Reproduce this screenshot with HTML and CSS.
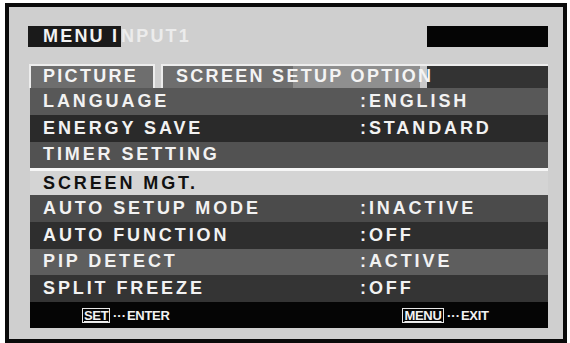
FILE: index.html
```html
<!DOCTYPE html>
<html>
<head>
<meta charset="utf-8">
<link rel="stylesheet" href="styles.css">
</head>
<body>
<div class="frame">
  <div class="header">
    <div class="title"><span class="title-on">MENU I</span><span class="title-off">NPUT1</span></div>
    <div class="blackbox"></div>
  </div>
  <div class="tabs">
    <div class="tab tab-picture">PICTURE</div>
    <div class="tab tab-screen">SCREEN SETUP OPTION</div>
  </div>
  <div class="rows">
    <div class="row r1"><span class="label">LANGUAGE</span><span class="value">:ENGLISH</span></div>
    <div class="row r2"><span class="label">ENERGY SAVE</span><span class="value">:STANDARD</span></div>
    <div class="row r3"><span class="label">TIMER SETTING</span><span class="value"></span></div>
    <div class="row r4"><span class="label">SCREEN MGT.</span><span class="value"></span></div>
    <div class="row r5"><span class="label">AUTO SETUP MODE</span><span class="value">:INACTIVE</span></div>
    <div class="row r6"><span class="label">AUTO FUNCTION</span><span class="value">:OFF</span></div>
    <div class="row r7"><span class="label">PIP DETECT</span><span class="value">:ACTIVE</span></div>
    <div class="row r8"><span class="label">SPLIT FREEZE</span><span class="value">:OFF</span></div>
  </div>
  <div class="footer">
    <div class="hint hint-set"><span class="key">SET</span><span class="dots">···</span>ENTER</div>
    <div class="hint hint-menu"><span class="key">MENU</span><span class="dots">···</span>EXIT</div>
  </div>
</div>
</body>
</html>
```

FILE: styles.css
```css
html, body {
  margin: 0;
  padding: 0;
  background: #ffffff;
}
body {
  width: 570px;
  height: 343px;
  overflow: hidden;
  font-family: "Liberation Sans", Arial, sans-serif;
  font-weight: bold;
}
.frame {
  box-sizing: border-box;
  margin: 3px 0 0 5px;
  width: 562px;
  height: 340px;
  border: 4px solid #0a0a0a;
  background: #cfcfcf;
  padding: 19px 15px 0 21px;
  display: flex;
  flex-direction: column;
}
.header {
  height: 21px;
  display: flex;
  justify-content: space-between;
  align-items: stretch;
}
.title {
  margin-left: -2px;
  display: flex;
  align-items: center;
  font-size: 18px;
  letter-spacing: 2.2px;
  line-height: 21px;
}
.title-on {
  background: #1a1a1a;
  color: #f2f2f2;
  padding-left: 15px;
  width: 78px;
  height: 21px;
  white-space: nowrap;
}
.title-off {
  color: #ececec;
}
.blackbox {
  width: 121px;
  background: #050505;
}
.tabs {
  margin-top: 17px;
  height: 24px;
  display: flex;
  margin-left: -1px;
}
.tab {
  box-sizing: border-box;
  height: 24px;
  border-top: 2px solid #ededed;
  font-size: 18px;
  letter-spacing: 2.3px;
  color: #f4f4f4;
  line-height: 20px;
  white-space: nowrap;
}
.tab-picture {
  width: 126px;
  background: #6e6e6e;
  border-left: 2px solid #ededed;
  border-right: 2px solid #ededed;
  padding-left: 12px;
}
.tab-screen {
  margin-left: 6px;
  flex: 1;
  border-left: 2px solid #ededed;
  padding-left: 13px;
  background: linear-gradient(to right,
    #6e6e6e 0, #6e6e6e 130px,
    #8f8f8f 130px, #8f8f8f 257px,
    #c9c9c9 257px, #c9c9c9 264px,
    #333333 264px, #333333 100%);
}
.rows {
  display: grid;
  grid-template-rows: repeat(8, 26.75px);
}
.row {
  display: flex;
  align-items: center;
  font-size: 18px;
  letter-spacing: 2.9px;
  color: #f2f2f2;
  white-space: nowrap;
}
.label {
  width: 317px;
  padding-left: 13px;
}
.value {
  flex: 1;
}
.r1 { background: #585858; }
.r2 { background: #2a2a2a; }
.r3 { background: #525252; }
.r4 {
  background: #d4d4d4;
  color: #111111;
  box-sizing: border-box;
  border-top: 3px solid #f6f6f6;
}
.r5 { background: #4b4b4b; }
.r6 { background: #2e2e2e; }
.r7 { background: #5e5e5e; }
.r8 { background: #343434; }
.footer {
  height: 26px;
  background: #050505;
  display: flex;
  align-items: center;
  color: #f2f2f2;
  font-size: 13px;
  letter-spacing: -0.3px;
}
.hint {
  display: flex;
  align-items: center;
}
.hint-set {
  margin-left: 52px;
  width: 320px;
}
.key {
  box-sizing: border-box;
  border: 1px solid #e8e8e8;
  height: 15px;
  line-height: 13px;
  padding: 0 1px;
  text-align: center;
  text-decoration: underline;
}
.hint-set .key { width: 28px; }
.hint-menu .key { width: 42px; }
.dots {
  margin: 0 1px 0 3px;
  letter-spacing: 0;
}
```
